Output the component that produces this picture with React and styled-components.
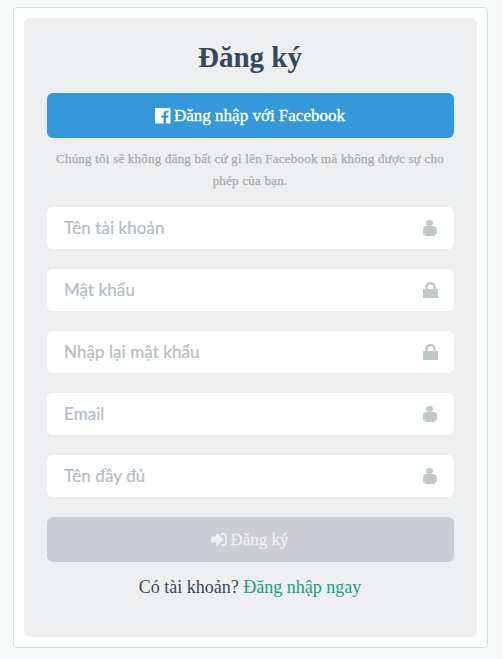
import React from "react";
import styled, { createGlobalStyle } from "styled-components";

const GlobalStyle = createGlobalStyle`
  *, *::before, *::after { box-sizing: border-box; }
  html { background: #fff; }
  body { margin: 0; font-family: "Liberation Serif", "Times New Roman", serif; color: #34495e; }
`;

const Page = styled.main`
  width: 502px;
  height: 659px;
  padding: 7px 14px 0 13px;
  background: #f5f9fa;
`;

const Card = styled.section`
  height: 641px;
  padding: 10px;
  background: #fff;
  border: 1px solid #d5d9dc;
  border-radius: 4px;
`;

const Form = styled.form`
  display: flex;
  flex-direction: column;
  height: 619px;
  padding: 22px 23px 0;
  background: #edeef0;
  border-radius: 6px;
`;

const Title = styled.h1`
  margin: 0;
  height: 53px;
  padding-right: 1px;
  font-size: 29px;
  line-height: 35px;
  font-weight: 700;
  text-align: center;
`;

const Button = styled.button`
  display: flex;
  align-items: center;
  justify-content: center;
  gap: 3px;
  flex: none;
  height: 45px;
  padding: 0 1px 0 0;
  border: 0;
  border-radius: 6px;
  background: ${(p) => p.$background};
  color: ${(p) => p.$color};
  font: 17px/24px "Liberation Serif", "Times New Roman", serif;
  -webkit-text-stroke: 0.3px currentColor;
  svg { display: block; -webkit-text-stroke: 0; }
`;

const Note = styled.p`
  margin: 10px 0 15px;
  height: 44px;
  padding-right: 1px;
  color: #a9abae;
  font-size: 13px;
  line-height: 22px;
  letter-spacing: 0.22px;
  text-align: center;
  -webkit-text-stroke: 0.25px currentColor;
`;

const Field = styled.label`
  display: flex;
  align-items: center;
  flex: none;
  height: 42px;
  margin-bottom: 20px;
  padding: 0 16px 0 17px;
  background: #fff;
  border-radius: 6px;
  color: #bfc9ca;
`;

const Input = styled.input`
  flex: 1;
  min-width: 0;
  padding: 0;
  border: 0;
  outline: 0;
  background: transparent;
  color: #34495e;
  font: 17px/24px Lato, sans-serif;
  letter-spacing: 0.07px;
  &::placeholder { color: #b2bcc5; opacity: 1; -webkit-text-stroke: 0.2px #b2bcc5; }
`;

const Footer = styled.p`
  margin: 10px 0 0;
  padding-right: 1px;
  font-size: 18px;
  line-height: 31px;
  text-align: center;
`;

const Link = styled.a`
  color: #16a085;
  text-decoration: none;
`;

const UserIcon = () => (
  <svg width="16" height="16" viewBox="0 0 16 16" fill="currentColor">
    <ellipse cx="7.500" cy="3" rx="3.500" ry="3" />
    <path d="M4 6.100h7C13.700 6.100 15 7.700 15 9.800v3.700c0 .7-.6 1-1.700 1-.2 1-.8 1.500-1.800 1.500h-7c-1 0-1.600-.5-1.800-1.500-1.100 0-1.700-.3-1.700-1V9.800C1 7.700 1.800 6.100 4 6.100z" />
    <path d="M3 10v4.400M13 10v4.400" stroke="#fff" strokeOpacity=".4" strokeWidth=".5" />
  </svg>
);

const LockIcon = () => (
  <svg width="16" height="16" viewBox="0 0 16 16" fill="currentColor">
    <path d="M1.600 7h13.800c.4 0 .6.200.6.600v7.800c0 .4-.2.600-.6.600H1.600c-.4 0-.6-.2-.6-.6V7.600c0-.4.200-.6.600-.6z" />
    <path d="M4.500 8V5.200C4.500 2.700 6.200 1.300 8.500 1.300s4 1.400 4 3.900V8" fill="none" stroke="currentColor" strokeWidth="2.500" />
  </svg>
);

const FacebookIcon = () => (
  <svg width="16" height="16" viewBox="0 0 16 16" fill="currentColor">
    <path d="M.7 0h14.100c.5 0 .7.300.7.700v14.100c0 .5-.2.700-.7.700h-3.700V9.700h2.200l.3-2.300h-2.500V5.900c0-.8.300-1.200 1.200-1.200h1.300V2.700h-1.900c-2 0-3.100 1.200-3.100 3v1.700H6.400v2.300h2.200v5.800H.7c-.5 0-.7-.2-.7-.7V.7C0 .3.200 0 .7 0z" />
  </svg>
);

const SignInIcon = () => (
  <svg width="16" height="14" viewBox="0 0 16 14" fill="currentColor">
    <path d="M0 4.300c0-.5.300-.9.900-.9h4.400V1.100c0-.9.800-1.100 1.300-.6l5.300 5.200c.5.500.5 1.100 0 1.600l-5.300 5.200c-.5.500-1.300.3-1.300-.6V9.600H.9c-.6 0-.9-.3-.9-.9z" />
    <path d="M9.800.900h2.700C14.100.9 15 1.800 15 3.300v6.500c0 1.500-.9 2.400-2.500 2.400H9.800" fill="none" stroke="currentColor" strokeWidth="1.800" />
  </svg>
);

const fields = [
  { label: "Tên tài khoản", type: "text", Icon: UserIcon },
  { label: "Mật khẩu", type: "password", Icon: LockIcon },
  { label: "Nhập lại mật khẩu", type: "password", Icon: LockIcon },
  { label: "Email", type: "email", Icon: UserIcon },
  { label: "Tên đầy đủ", type: "text", Icon: UserIcon },
];

export default function App() {
  return (
    <>
      <GlobalStyle />
      <Page>
        <Card>
          <Form>
            <Title>Đăng ký</Title>
            <Button type="button" $background="#3498db" $color="#fff">
              <FacebookIcon />
              <span>Đăng nhập với Facebook</span>
            </Button>
            <Note>Chúng tôi sẽ không đăng bất cứ gì lên Facebook mà không được sự cho phép của bạn.</Note>
            {fields.map(({ label, type, Icon }) => (
              <Field key={label}>
                <Input type={type} placeholder={label} aria-label={label} />
                <Icon />
              </Field>
            ))}
            <Button type="submit" disabled $background="#cbcdd2" $color="#eeeff1">
              <SignInIcon />
              <span>Đăng ký</span>
            </Button>
            <Footer>Có tài khoản? <Link href="#">Đăng nhập ngay</Link></Footer>
          </Form>
        </Card>
      </Page>
    </>
  );
}
